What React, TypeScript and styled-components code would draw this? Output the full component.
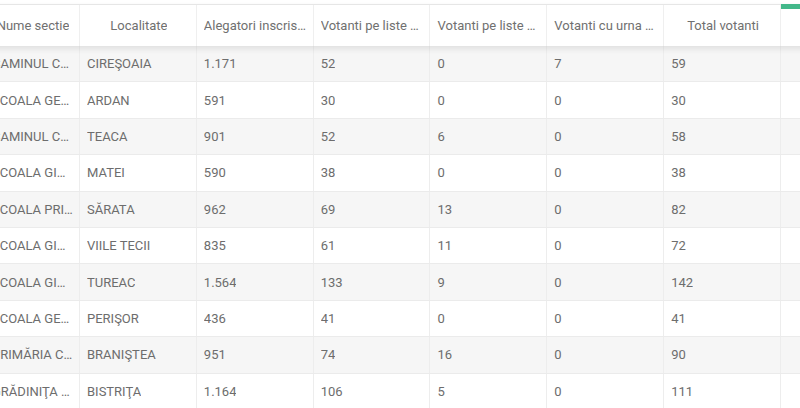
import React from "react";
import styled, { createGlobalStyle } from "styled-components";

const COL_FIRST = "95px";
const COL_W = "116.83px";
const COL_LAST = "140px";
const TEMPLATE = `${COL_FIRST} repeat(6, ${COL_W}) ${COL_LAST}`;

const GlobalStyle = createGlobalStyle`
  html, body {
    margin: 0;
    padding: 0;
    background: #ffffff;
    overflow: hidden;
  }
  body {
    font-family: "Roboto", "Liberation Sans", sans-serif;
  }
`;

const Viewport = styled.div`
  width: 800px;
  height: 408px;
  overflow: hidden;
  padding-top: 4px;
  box-sizing: border-box;
`;

const Grid = styled.div`
  margin-left: -15px;
  width: max-content;
`;

const HeaderRow = styled.div`
  display: grid;
  grid-template-columns: ${TEMPLATE};
  height: 42px;
  border-top: 1px solid #e6e6e6;
  box-sizing: border-box;
  background: #ffffff;
  position: relative;
  z-index: 1;
  box-shadow: 0 3px 6px rgba(0, 0, 0, 0.09);
`;

const HeadCell = styled.div<{ $accent?: boolean }>`
  position: relative;
  display: flex;
  align-items: center;
  justify-content: center;
  padding: 0 5px 0 7px;
  font-size: 13px;
  color: #707070;
  border-right: 1px solid #efefef;
  min-width: 0;

  span {
    display: block;
    white-space: nowrap;
    overflow: hidden;
    text-overflow: ellipsis;
  }

  &::before {
    content: "";
    display: ${(p) => (p.$accent ? "block" : "none")};
    position: absolute;
    top: -1px;
    left: 0;
    right: 0;
    height: 5px;
    background: #43b88a;
  }
`;

const Row = styled.div<{ $striped: boolean }>`
  display: grid;
  grid-template-columns: ${TEMPLATE};
  height: 36.4px;
  box-sizing: border-box;
  border-bottom: 1px solid #ebebeb;
  background: ${(p) => (p.$striped ? "#f6f6f6" : "#ffffff")};
`;

const Cell = styled.div`
  display: flex;
  align-items: center;
  padding: 0 3px 0 7px;
  font-size: 13px;
  color: #6d6d6d;
  border-right: 1px solid #ededed;
  min-width: 0;

  span {
    display: block;
    white-space: nowrap;
    overflow: hidden;
    text-overflow: ellipsis;
  }
`;

const headers = [
  "Nume sectie",
  "Localitate",
  "Alegatori inscrisi pe liste permanente",
  "Votanti pe liste permanente",
  "Votanti pe liste suplimentare",
  "Votanti cu urna mobila",
  "Total votanti",
  "",
];

const rows: string[][] = [
  ["CAMINUL CULTURAL", "CIREŞOAIA", "1.171", "52", "0", "7", "59"],
  ["ŞCOALA GENERALĂ", "ARDAN", "591", "30", "0", "0", "30"],
  ["CAMINUL CULTURAL", "TEACA", "901", "52", "6", "0", "58"],
  ["ŞCOALA GIMNAZIALĂ", "MATEI", "590", "38", "0", "0", "38"],
  ["ŞCOALA PRIMARĂ", "SĂRATA", "962", "69", "13", "0", "82"],
  ["ŞCOALA GIMNAZIALĂ", "VIILE TECII", "835", "61", "11", "0", "72"],
  ["ŞCOALA GIMNAZIALĂ", "TUREAC", "1.564", "133", "9", "0", "142"],
  ["ŞCOALA GENERALĂ", "PERIŞOR", "436", "41", "0", "0", "41"],
  ["PRIMĂRIA COMUNEI", "BRANIŞTEA", "951", "74", "16", "0", "90"],
  ["GRĂDINIŢA CU PROGRAM", "BISTRIŢA", "1.164", "106", "5", "0", "111"],
];

const App = () => {
  return (
    <>
      <GlobalStyle />
      <Viewport>
        <Grid>
          <HeaderRow>
            {headers.map((h, i) => (
              <HeadCell key={i} $accent={i === headers.length - 1}>
                <span>{h}</span>
              </HeadCell>
            ))}
          </HeaderRow>
          {rows.map((r, i) => (
            <Row key={i} $striped={i % 2 === 0}>
              {r.map((v, j) => (
                <Cell key={j}>
                  <span>{v}</span>
                </Cell>
              ))}
              <Cell />
            </Row>
          ))}
        </Grid>
      </Viewport>
    </>
  );
};

export default App;
